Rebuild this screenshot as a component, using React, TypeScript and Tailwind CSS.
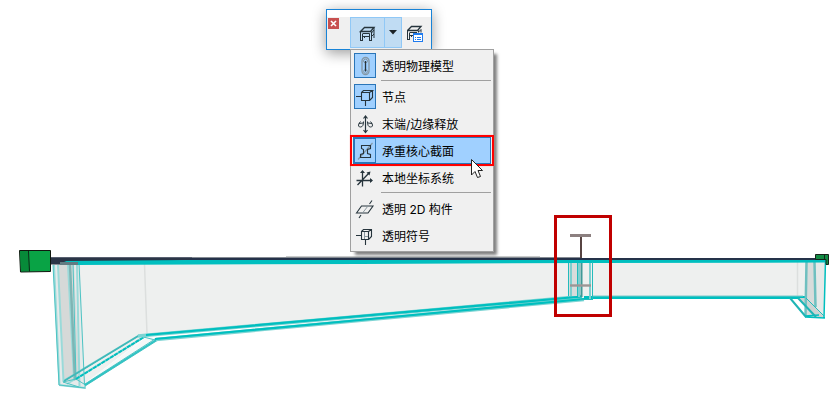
import type { ReactNode } from "react";

const INK = "#26343c";
const TEAL = "#00bfbf";

function Icon({ children }: { children: ReactNode }) {
  return (
    <svg width="20" height="20" viewBox="0 0 20 20" fill="none" stroke={INK} strokeWidth="1" className="shrink-0" aria-hidden="true">
      {children}
    </svg>
  );
}

function FrameIcon() {
  return (
    <Icon>
      <path d="M2.500 8.500 6.500 4.500H16L12.500 8.500Z" strokeWidth="1.300" />
      <path d="M2.500 8.500V18M4.500 11V18M4.500 10.500H11.500M4.500 13.500H11.500M11.500 10.500V18M13.500 8.500V18M13.500 10 16 7M16 4.500V15M6.500 13.500V15M2 17.500H5M11 17.500H14M13.500 13.500 16 11" />
    </Icon>
  );
}

function FrameSettingsIcon() {
  return (
    <Icon>
      <path d="M.5 7.500 4.500 3.500H14L10.500 7.500Z" strokeWidth="1.300" />
      <path d="M.5 7.500V17M2.500 10V17M2.500 9.500H10M2.500 12.500H6M11.500 7.500V9.500M11.500 9 14 6.500V9.500M4.500 12.500V14M0 16.500H3" />
      <rect x="6.500" y="10.500" width="9" height="8" fill="#fff" stroke="#1f7bef" />
      <path d="M6 11H16" stroke="#1f7bef" strokeWidth="2" />
      <path d="M8 14.500H9M10 14.500H14M8 16.500H9M10 16.500H14" stroke="#1f7bef" />
    </Icon>
  );
}

function ModelIcon() {
  return (
    <Icon>
      <rect x="7" y="1.500" width="7" height="17" rx="3.500" stroke="#8496a3" strokeWidth="1.300" />
      <ellipse cx="10.500" cy="5" rx="2" ry="1.800" stroke="#8496a3" />
      <ellipse cx="10.500" cy="15.500" rx="2" ry="1.800" stroke="#8496a3" />
      <path d="M10.500 5V15.500" strokeWidth="1.300" />
    </Icon>
  );
}

function NodeIcon() {
  return (
    <Icon>
      <path d="M1 9.500H6.500M10.500 13.500V19M6.500 5.500H14.500V13.500H6.500ZM6.500 5.500 8.500 3.500H17.500L14.500 5.500M17.500 3.500V10.500L14.500 13.500" strokeWidth="1.100" />
    </Icon>
  );
}

function ReleaseIcon() {
  return (
    <Icon>
      <path d="M10.500 3V18M8.500 4.500 10.500 2 12.500 4.500M8.500 16 10.500 18.500 12.500 16" strokeWidth="1.200" />
      <path d="M8.500 7.500Q8.500 13 5.500 13T4 9.500L8 9M4 9.500 5.500 7.500M12.500 7.500Q12.500 13 15.500 13T17 9.500L13 9M17 9.500 15.500 7.500" />
    </Icon>
  );
}

function SectionIcon() {
  return (
    <Icon>
      <path d="M3 18.500 17.500 2" stroke="#8296a4" strokeWidth="1.200" />
      <path d="M6.500 4.500H15.500V7.500L12.500 8.500V12.500L15.500 13.500V16.500H5.500V13.500L8.500 12.500V8.500L6.500 7.500Z" strokeWidth="1.100" />
    </Icon>
  );
}

function AxesIcon() {
  return (
    <Icon>
      <path d="M1.500 12.500H17M7.500 3V18.500M2.500 17 14 5" strokeWidth="1.300" />
      <path d="M15 10 18 12.500 15 15ZM5 5 7.500 2 10 5ZM11.500 4.500 15.500 3.500 14.500 7.500Z" fill={INK} stroke="none" />
    </Icon>
  );
}

function MemberIcon() {
  return (
    <Icon>
      <path d="M1.500 14 6.500 7H18L13 14ZM4 19 6 16M14.500 5 17 1.500" strokeWidth="1.100" />
      <path d="M7.500 14 13 7" stroke="#8b989f" />
    </Icon>
  );
}

function SymbolIcon() {
  return (
    <Icon>
      <path d="M1 9.500H6.500M10.500 13.500V19M6.500 5.500H13.500V13.500H6.500ZM6.500 5.500 8.500 3.500H16.500V10.500L13.500 13.500M13.500 5.500 16.500 3.500" strokeWidth="1.100" />
      <path d="M9.500 6V13M9.500 10.500H13" stroke="#8b989f" />
    </Icon>
  );
}

type Item = { label: string; icon: ReactNode; checked?: boolean; active?: boolean };

const groups: Item[][] = [
  [{ label: "透明物理模型", icon: <ModelIcon />, checked: true }],
  [
    { label: "节点", icon: <NodeIcon />, checked: true },
    { label: "末端/边缘释放", icon: <ReleaseIcon /> },
    { label: "承重核心截面", icon: <SectionIcon />, checked: true, active: true },
    { label: "本地坐标系统", icon: <AxesIcon /> },
  ],
  [
    { label: "透明 2D 构件", icon: <MemberIcon /> },
    { label: "透明符号", icon: <SymbolIcon /> },
  ],
];

function MenuItem({ item }: { item: Item }) {
  return (
    <button
      type="button"
      role="menuitemcheckbox"
      aria-checked={!!item.checked}
      className={`relative flex h-[27px] w-full items-center border text-left ${
        item.active ? "border-[#2a75b8] bg-[#a0d0ff]" : "border-transparent"
      }`}
    >
      <span
        className={`flex h-[25px] w-[22px] shrink-0 items-center justify-center border ${
          item.checked ? "border-[#2a75b8] bg-[#a0d0ff]" : "border-transparent"
        }`}
      >
        {item.icon}
      </span>
      <span className="pt-0.5 pl-1.5 whitespace-nowrap">{item.label}</span>
      {item.active && (
        <>
          <span className="pointer-events-none absolute -inset-x-1 -inset-y-[3px] border-2 border-[#f00] shadow-[0_0_1px_#ff9a9a]" />
          <svg className="absolute top-5 right-1.5 z-10" width="14" height="22" viewBox="0 0 14 22" aria-hidden="true">
            <path d="M1.500 1.500V17L5 13.500 7.500 19.500 10.500 18.500 8 12.500H12.500Z" fill="#fff" stroke="#222" />
          </svg>
        </>
      )}
    </button>
  );
}

function Palette() {
  return (
    <section
      aria-label="结构分析模型"
      className="absolute top-[9px] left-[326px] border border-[#1883d7] bg-[#f0f0f0] shadow-[0_3px_14px_rgba(0,0,0,0.4)]"
    >
      <div className="h-[7px] bg-white" />
      <div className="flex h-8 w-[104px] items-start">
        <button type="button" aria-label="关闭" className="mt-px ml-px flex size-[11px] items-center justify-center bg-[#c75050]">
          <svg width="7" height="7" viewBox="0 0 7 7" stroke="#fff" strokeWidth="1.6" aria-hidden="true">
            <path d="M1 1 6 6M6 1 1 6" />
          </svg>
        </button>
        <div className="ml-[11px] flex h-[31px] border border-[#90c8f6] bg-[#c0dcf3]">
          <button type="button" aria-label="显示模型" className="flex w-[34px] items-center justify-center border-r border-[#90c8f6]">
            <FrameIcon />
          </button>
          <button type="button" aria-label="显示选项" aria-expanded="true" className="flex w-4 items-center justify-center">
            <svg width="8" height="5" viewBox="0 0 8 5" fill="#1b2226" aria-hidden="true">
              <path d="M0 0H8L4 4.500Z" />
            </svg>
          </button>
        </div>
        <button type="button" aria-label="模型设置" className="flex h-[31px] flex-1 items-center justify-center">
          <FrameSettingsIcon />
        </button>
      </div>
    </section>
  );
}

function Menu() {
  return (
    <div
      role="menu"
      className="absolute top-[49px] left-[350px] w-36 border border-[#a0a0a0] bg-[#f0f0f0] p-0.5 shadow-[4px_4px_3px_-1px_rgba(0,0,0,0.5)]"
    >
      {groups.map((group, index) => (
        <div key={index}>
          {index > 0 && (
            <div role="separator" className="flex h-1 items-start pt-px pl-7">
              <span className="h-px w-full bg-[#a0a0a0]" />
            </div>
          )}
          {group.map((item) => (
            <MenuItem key={item.label} item={item} />
          ))}
        </div>
      ))}
    </div>
  );
}

function Bridge() {
  return (
    <svg className="block h-auto w-full" viewBox="0 0 834 420" fill="none" role="img" aria-label="梁模型">
      {/* girder face */}
      <path d="M79 262H826L824 318 803 297H582L148 335 84 384Z" fill="#eef0ef" />
      <path d="M53 264H80L85 388 59 385Z" fill="#e6eaea" />
      <path d="M58 264H74L79 380 64 382Z" fill="#d6d9d8" />
      <path d="M84 384 148 336 157 339 85 387Z" fill="#f4f8f8" />
      <path d="M144.500 264 147 334M797.500 262V297" stroke="#dcdfde" strokeWidth="1.5" />

      {/* left end */}
      <g stroke="#9adad9" strokeWidth="2">
        <path d="M58 265 63.500 382M68 265 74 379M77 265 79.500 387M54 265 59.500 385" />
        <path d="M63 381 138 336M67 384 142 338M59 385 85 388V384M85 385 156 340" />
      </g>
      <path d="M70 265 75 380" stroke="#7fb5b4" strokeWidth="2.500" />
      <g stroke="#4cc4c4">
        <path d="M53 265 59 385 85 388M73 263 76 379M79 263 84.500 385M63 382 76 379 84 384M63 382 79 387" />
        <path d="M64 381 139 335.500M74 380 145 337M85 384 155 339M85 386 158 340M138 335.500 155 340" />
      </g>
      <path d="M64 381 139 335.500" stroke="#3fb9b9" strokeWidth="1.500" />
      <path d="M76 379 144 337" stroke={TEAL} strokeWidth="2" strokeDasharray="4 1" />
      <path d="M85 385 157 339.500" stroke="#2fc3c3" strokeWidth="1.500" />

      {/* bottom flange */}
      <path d="M138 336 582 296.500M156 339.500 584 299.500" stroke="#7dd4d3" strokeWidth="3.500" />
      <path d="M146 335 582 296.500M155 339 360 320 584 299" stroke={TEAL} strokeWidth="2.2" />
      <path d="M584 297.500H805" stroke={TEAL} strokeWidth="2.8" />
      <path d="M592 296H803" stroke="#7dcaca" />

      {/* right end */}
      <path d="M806 262H815V308L824 317H805Z" fill="#d8dcdb" />
      <path d="M815 262H826L824 318 815 308Z" fill="#e6e9e8" />
      <path d="M798 298H806L824 317H815Z" fill="#cdd3d2" />
      <path d="M806.500 262 805.500 316M814.500 262 815.500 307" stroke="#6fc0c0" strokeWidth="2.5" />
      <path d="M825.500 260 824 318M805 317 825 318M805 316 819 315" stroke={TEAL} strokeWidth="1.5" />
      <path d="M790 298 806 317M798 298 816 317" stroke="#1fb5b5" strokeWidth="2" />
      <path d="M806 298 824 316" stroke="#20bcbc" />

      {/* top flange */}
      <path d="M286 256.500H540" stroke="#c9cbcb" />
      <path d="M50 257H190V260H200L75 264.500H50Z" fill="#2b3547" />
      <path d="M190 258H816V260H190Z" fill="#25324a" />
      <path d="M50 257.500H192" stroke="#586070" />
      <path d="M192 257.500H580" stroke="#858b93" />
      <path d="M64 261 190 260H827V262.500L592 263 360 264 74 265Z" fill={TEAL} />
      <path d="M60 263.500H78" stroke="#627b82" strokeWidth="3" />

      {/* end supports */}
      <path d="M19.500 250.500H50.500L50.500 271.500 20.500 272Z" fill="#09a345" stroke="#10170f" />
      <path d="M20 251H28.500L29.500 271H21Z" fill="#078a39" />
      <path d="M28.500 251 29.500 271.500" stroke="#0b2816" />
      <path d="M815.500 254.500H828.500V264.500H826V259.500H815.500Z" fill="#118b43" stroke="#16231b" />
      <path d="M824.500 255V259" stroke="#16231b" />

      {/* core section */}
      <path d="M569 263H580V296H569Z" fill="#d8dcdb" />
      <path d="M571 263V296M579 263V297M590 263V299" stroke="#7dcfcf" strokeWidth="2" />
      <path d="M568.500 263V296M577.500 263V296M592.500 262V300M580 299.500H592" stroke="#23bcbc" />
      <path d="M581 236V258" stroke="#574442" strokeWidth="2" />
      <path d="M581.500 263V297" stroke="#3f9997" strokeWidth="2" />
      <path d="M570 235.500H591" stroke="#8c8080" strokeWidth="3" />
      <path d="M570 285.500H591" stroke="#9c9695" strokeWidth="2.4" />
      <rect x="555.500" y="216.500" width="55" height="99" stroke="#c00000" strokeWidth="3" />
    </svg>
  );
}

export default function App() {
  return (
    <main className="relative w-full overflow-hidden bg-white font-['Inter','Noto_Sans_CJK_SC',sans-serif] text-xs text-black">
      <Bridge />
      <Palette />
      <Menu />
    </main>
  );
}
